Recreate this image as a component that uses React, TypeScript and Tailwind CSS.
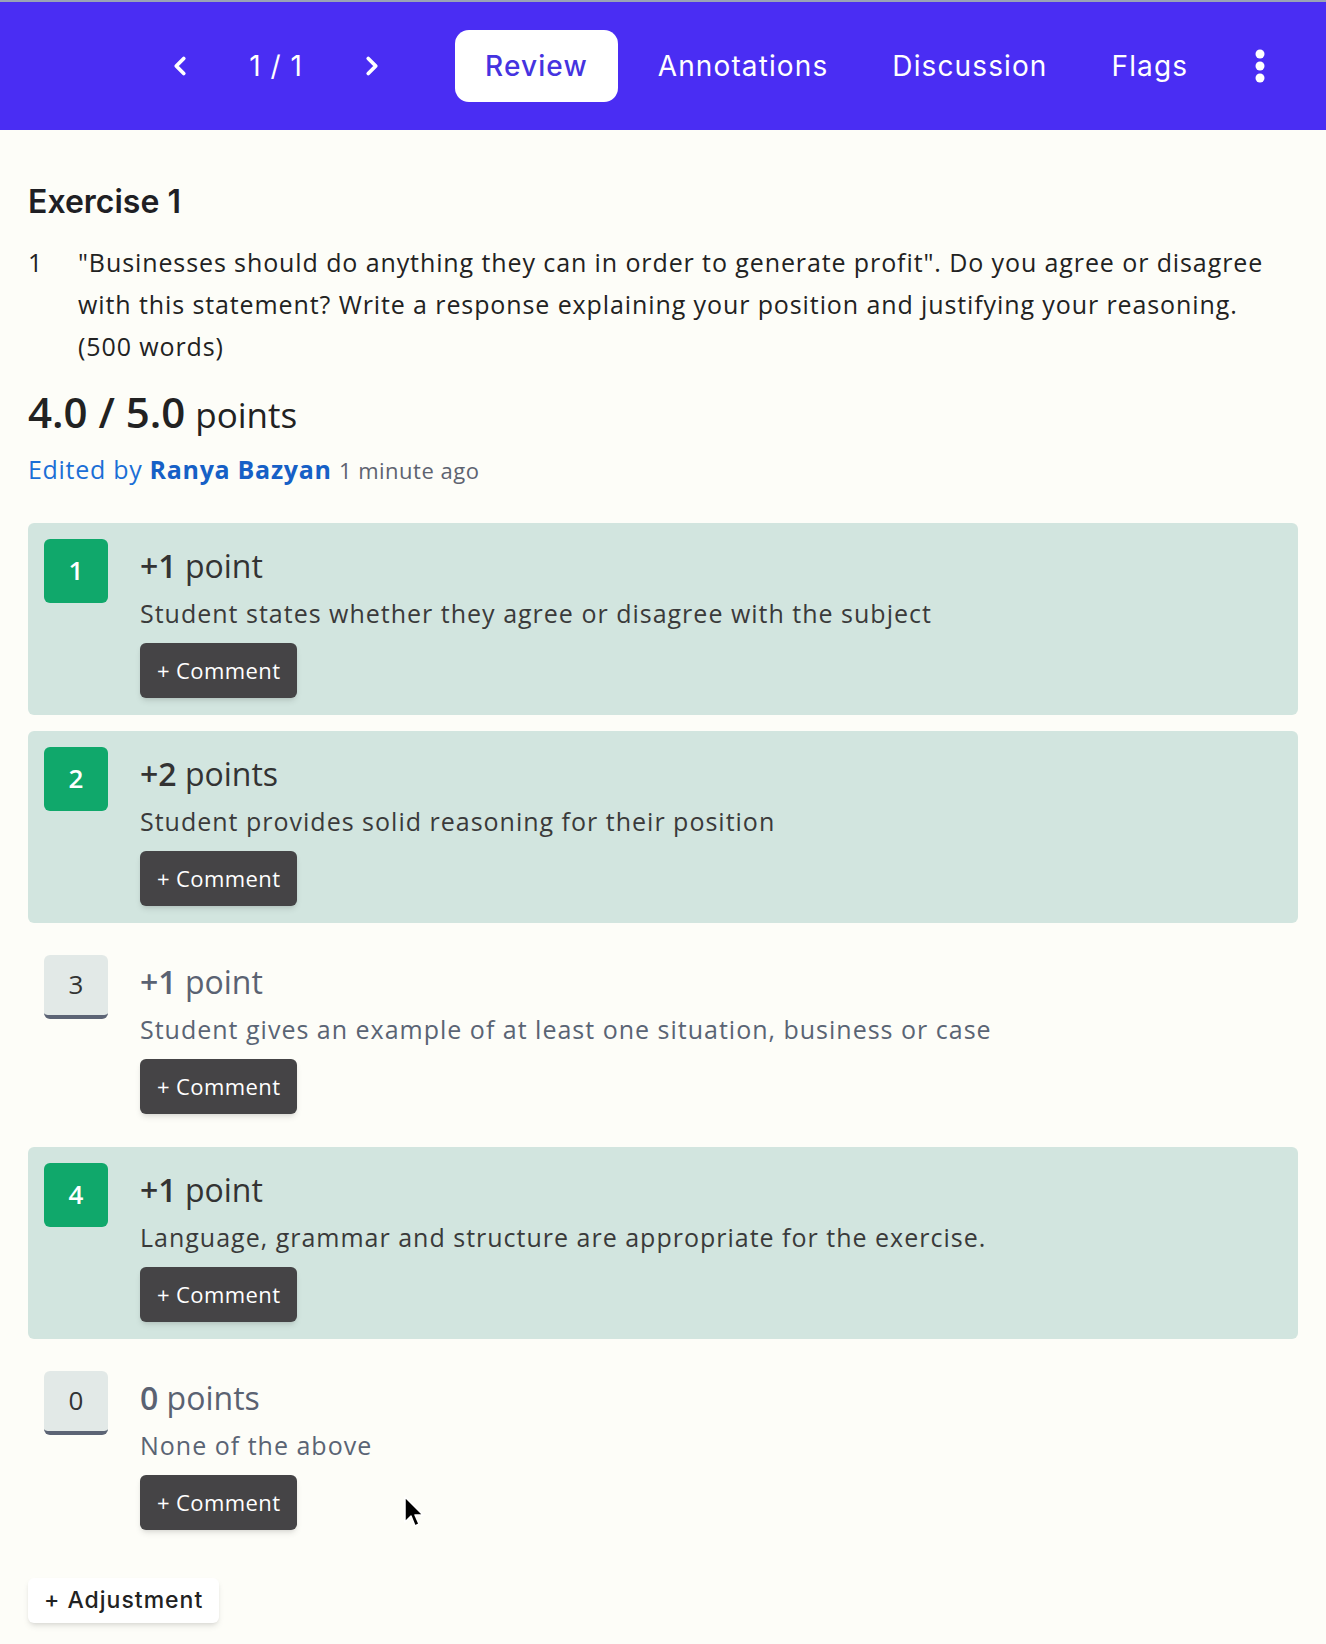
import React from 'react';
import { ChevronLeft, ChevronRight } from 'lucide-react';

interface Criterion {
  badge: string;
  amount: string;
  unit: string;
  text: string;
  selected: boolean;
}

const criteria: Criterion[] = [
  { badge: '1', amount: '+1', unit: 'point', text: 'Student states whether they agree or disagree with the subject', selected: true },
  { badge: '2', amount: '+2', unit: 'points', text: 'Student provides solid reasoning for their position', selected: true },
  { badge: '3', amount: '+1', unit: 'point', text: 'Student gives an example of at least one situation, business or case', selected: false },
  { badge: '4', amount: '+1', unit: 'point', text: 'Language, grammar and structure are appropriate for the exercise.', selected: true },
  { badge: '0', amount: '0', unit: 'points', text: 'None of the above', selected: false },
];

const heading = { fontFamily: 'Inter, "Liberation Sans", sans-serif' };
const body = { fontFamily: '"Open Sans", "Noto Sans", sans-serif' };

function CriterionCard({ c }: { c: Criterion }) {
  return (
    <div className={`flex rounded-md px-4 pt-4 pb-[17px] ${c.selected ? 'bg-[#d2e5df]' : ''}`}>
      {c.selected ? (
        <div className="flex h-16 w-16 shrink-0 items-center justify-center rounded-md bg-[#10a86b] text-[26px] font-semibold text-white">
          {c.badge}
        </div>
      ) : (
        <div className="flex h-16 w-16 shrink-0 items-center justify-center rounded-md border-b-4 border-[#5c6475] bg-[#e2e9e7] text-[26px] text-[#333]">
          {c.badge}
        </div>
      )}
      <div className="ml-8 flex flex-col items-start">
        <div className={`mt-[5px] h-[44px] text-[32px] leading-[44px] ${c.selected ? 'text-[#333]' : 'text-[#5a6272]'}`}>
          <span className="font-semibold">{c.amount}</span> {c.unit}
        </div>
        <div className={`mt-2 text-[25px] leading-[34px] tracking-[1px] ${c.selected ? 'text-[#3a3a3a]' : 'text-[#5a6474]'}`}>
          {c.text}
        </div>
        <button className="mt-[13px] flex h-[55px] items-center rounded-md bg-[#454446] px-[17px] text-[22px] tracking-[0.4px] text-white shadow-md">
          + Comment
        </button>
      </div>
    </div>
  );
}

export default function App() {
  return (
    <div className="relative min-h-screen bg-[#fdfdf8]" style={body}>
      <header className="flex h-[130px] items-center border-t-2 border-[#9aa3b5] bg-[#4a2df3] pl-[156px] text-white" style={heading}>
        <button className="flex h-12 w-12 items-center justify-center">
          <ChevronLeft size={30} strokeWidth={3} />
        </button>
        <span className="ml-[22px] w-[100px] text-center text-[28px] tracking-[1px]">1 / 1</span>
        <button className="ml-[22px] flex h-12 w-12 items-center justify-center">
          <ChevronRight size={30} strokeWidth={3} />
        </button>
        <nav className="ml-[59px] flex items-center text-[28px] tracking-[0.04em]">
          <button className="mr-[8px] flex h-[72px] items-center rounded-[14px] bg-white px-[30px] font-medium text-[#4533e0]">Review</button>
          <button className="flex h-[72px] items-center px-8">Annotations</button>
          <button className="flex h-[72px] items-center px-8">Discussion</button>
          <button className="flex h-[72px] items-center px-8">Flags</button>
        </nav>
        <button className="ml-[28px] flex h-12 w-6 items-center justify-center">
          <svg width="10" height="34" viewBox="0 0 10 34" fill="white">
            <circle cx="5" cy="5" r="4.5" />
            <circle cx="5" cy="17" r="4.5" />
            <circle cx="5" cy="29" r="4.5" />
          </svg>
        </button>
      </header>

      <main className="px-7 pb-5">
        <h1 className="mt-[52px] text-[32px] font-semibold leading-[40px] text-[#1f1f24]" style={heading}>Exercise 1</h1>

        <div className="mt-[19px] flex text-[25px] leading-[42px] tracking-[0.9px] text-[#222]">
          <span className="w-[50px] shrink-0">1</span>
          <p>
            "Businesses should do anything they can in order to generate profit". Do you agree or disagree with this statement? Write a response explaining your position and justifying your reasoning. (500 words)
          </p>
        </div>

        <div className="mt-[17px] text-[#222]">
          <span className="text-[42px] font-semibold leading-[56px]">4.0 / 5.0</span>
          <span className="ml-[10px] text-[35px]">points</span>
        </div>
        <div className="mt-[11px] text-[25px] leading-[32px] tracking-[0.7px] text-[#1b6fd6]">
          Edited by <span className="font-bold text-[#1660c6]">Ranya Bazyan</span>{' '}
          <span className="text-[22px] tracking-[0.5px] text-[#5d6370]">1 minute ago</span>
        </div>

        <div className="mt-[37px] flex flex-col gap-4">
          {criteria.map((c) => (
            <CriterionCard key={c.badge} c={c} />
          ))}
        </div>

        <button className="mt-[31px] flex h-[45px] items-center rounded-md bg-white px-4 text-[23px] font-medium tracking-[1px] text-[#222] shadow-md" style={heading}>
          + Adjustment
        </button>
      </main>

      <svg className="absolute left-[404px] top-[1496px]" width="22" height="34" viewBox="0 0 22 34">
        <path d="M1 1 L1 26 L7 20 L11 30 L15 28 L11 19 L19 19 Z" fill="black" stroke="white" strokeWidth="1.5" strokeLinejoin="round" />
      </svg>
    </div>
  );
}
